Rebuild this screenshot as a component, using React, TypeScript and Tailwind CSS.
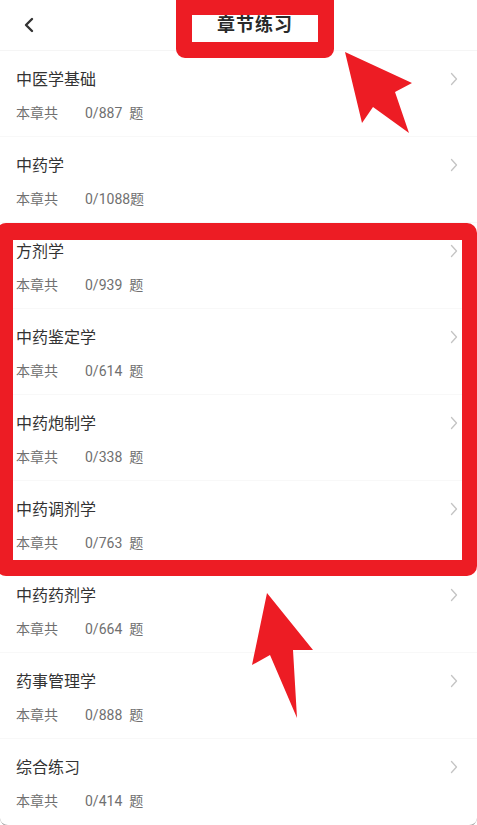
import React from "react";

const chapters = [
  { name: "中医学基础", count: "0/887 题" },
  { name: "中药学", count: "0/1088题" },
  { name: "方剂学", count: "0/939 题" },
  { name: "中药鉴定学", count: "0/614 题" },
  { name: "中药炮制学", count: "0/338 题" },
  { name: "中药调剂学", count: "0/763 题" },
  { name: "中药药剂学", count: "0/664 题" },
  { name: "药事管理学", count: "0/888 题" },
  { name: "综合练习", count: "0/414 题" },
];

function ChevronRight() {
  return (
    <svg width="8" height="14" viewBox="0 0 8 14" fill="none">
      <path d="M1.5 1.5 L6.5 7 L1.5 12.5" stroke="#c4c4c4" strokeWidth="1.3" strokeLinecap="round" strokeLinejoin="round" />
    </svg>
  );
}

export default function App() {
  return (
    <div
      className="relative w-[477px] h-[825px] overflow-hidden bg-white text-[#333]"
      style={{ fontFamily: '"Roboto", "Noto Sans CJK SC", sans-serif' }}
    >
      {/* header */}
      <header className="h-[51px] flex items-center border-b border-[#f5f5f5]">
        <svg className="ml-[23px]" width="12" height="16" viewBox="0 0 12 16" fill="none">
          <path d="M9 2 L3 8 L9 14" stroke="#333" strokeWidth="2.4" strokeLinecap="round" strokeLinejoin="round" />
        </svg>
        <h1 className="ml-[182px] text-[18px] font-bold tracking-[1px] leading-none text-[#2a2a2a]">章节练习</h1>
      </header>

      {/* list */}
      <ul className="rounded-b-lg border-b border-[#9a9a9a]">
        {chapters.map((c, i) => (
          <li
            key={c.name}
            className={
              "h-[86px] pl-[16px] pr-[19px] pt-[18px] flex justify-between " +
              (i < chapters.length - 1 ? "border-b border-[#f8f8f8]" : "")
            }
          >
            <div>
              <div className="text-[16px] leading-[22px] text-[#333]">{c.name}</div>
              <div className="mt-[12px] flex text-[14px] leading-[20px] text-[#707070]">
                <span className="w-[69px]">本章共</span>
                <span className="whitespace-pre">{c.count.replace(" ", "  ")}</span>
              </div>
            </div>
            <div className="pt-[3px]">
              <ChevronRight />
            </div>
          </li>
        ))}
      </ul>

      {/* annotation: title highlight */}
      <div className="absolute left-[176px] top-[-10px] w-[158px] h-[68px] rounded-[9px] border-[#ed1c24] border-x-[16px] border-t-[25px] border-b-[16px]" />

      {/* annotation: group highlight */}
      <div className="absolute left-[-4px] top-[223px] w-[481px] h-[353px] rounded-[10px] border-[#ed1c24] border-l-[17px] border-r-[15px] border-t-[17px] border-b-[16px]" />

      {/* annotation arrows */}
      <svg className="absolute left-0 top-0 pointer-events-none" width="477" height="825" viewBox="0 0 477 825">
        <polygon points="345,52 412,83 395,92 409,133 373,107 362,123" fill="#ed1c24" />
        <polygon points="267,593 313,650 293,650 297,718 270,655 252,665" fill="#ed1c24" />
      </svg>
    </div>
  );
}
